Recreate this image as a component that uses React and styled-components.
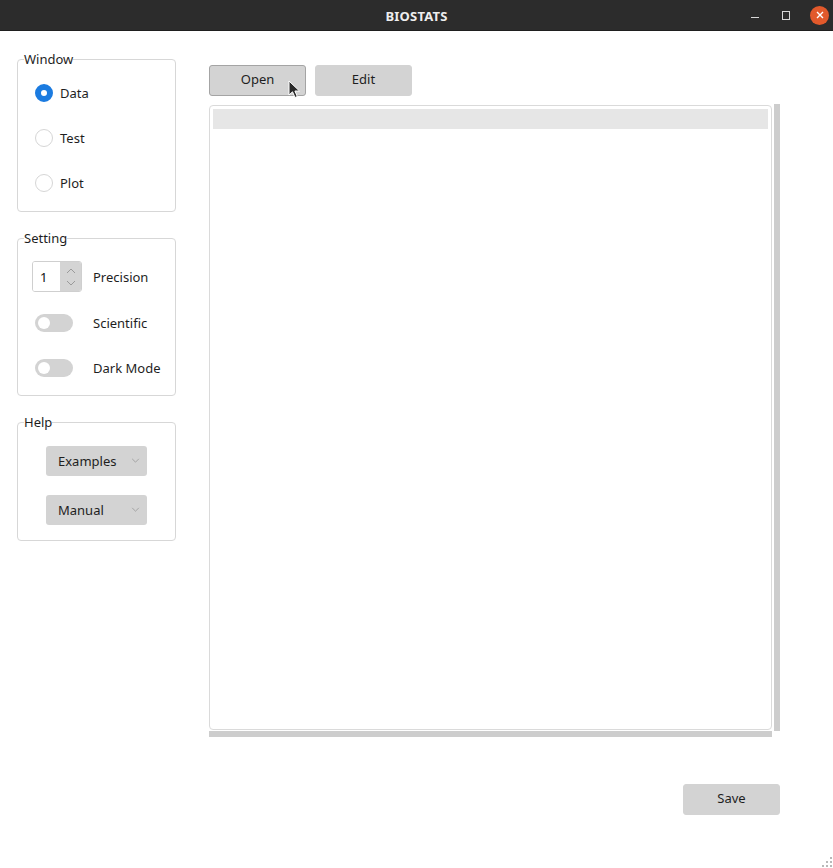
import React from 'react';
import styled, { createGlobalStyle } from 'styled-components';

const GlobalStyle = createGlobalStyle`
  html, body {
    margin: 0;
    padding: 0;
    background: #ffffff;
  }
  body {
    font-family: "Noto Sans", "Open Sans", "DejaVu Sans", sans-serif;
    font-size: 13px;
    color: #1e1e1e;
  }
`;

const Chevron = ({ up, color = '#8a8a8a', size = 9 }) => (
  <svg width={size} height={Math.round(size * 0.6)} viewBox="0 0 10 6">
    <polyline
      points={up ? '1,5 5,1 9,5' : '1,1 5,5 9,1'}
      fill="none"
      stroke={color}
      strokeWidth="1"
    />
  </svg>
);

const App = () => {
  return (
    <Frame>
      <GlobalStyle />
      <TitleBar>
        <span />
        <Title>BIOSTATS</Title>
        <Controls>
          <MinBtn />
          <MaxBtn />
          <CloseBtn>
            <svg width="8" height="8" viewBox="0 0 8 8">
              <path d="M1 1L7 7M7 1L1 7" stroke="#fff" strokeWidth="1.4" />
            </svg>
          </CloseBtn>
        </Controls>
      </TitleBar>

      <Body>
        <Sidebar>
          <Group $pt={3} $pb={6}>
            <Legend>Window</Legend>
            <Content $pl={17}>
              <Row $h={45}>
                <Radio $checked />
                <Label>Data</Label>
              </Row>
              <Row $h={45}>
                <Radio />
                <Label>Test</Label>
              </Row>
              <Row $h={45}>
                <Radio />
                <Label>Plot</Label>
              </Row>
            </Content>
          </Group>

          <Group $pt={8} $pb={6}>
            <Legend>Setting</Legend>
            <Content $pl={14}>
              <Row $h={45}>
                <Spin>
                  <SpinValue>1</SpinValue>
                  <SpinArrows>
                    <Chevron up size={10} color="#9a9a9a" />
                    <Chevron size={10} color="#9a9a9a" />
                  </SpinArrows>
                </Spin>
                <Label $gap={11}>Precision</Label>
              </Row>
              <Row $h={47}>
                <Toggle />
                <Label $gap={20}>Scientific</Label>
              </Row>
              <Row $h={43}>
                <Toggle />
                <Label $gap={20}>Dark Mode</Label>
              </Row>
            </Content>
          </Group>

          <Group $pt={6} $pb={6}>
            <Legend>Help</Legend>
            <Content $pl={28}>
              <Row $h={49}>
                <Combo>
                  Examples
                  <Chevron color="#9a9a9a" />
                </Combo>
              </Row>
              <Row $h={49}>
                <Combo>
                  Manual
                  <Chevron color="#9a9a9a" />
                </Combo>
              </Row>
            </Content>
          </Group>
        </Sidebar>

        <Main>
          <Toolbar>
            <Button $focused>Open</Button>
            <Button>Edit</Button>
          </Toolbar>

          <TableArea>
            <Table>
              <HeaderRow />
            </Table>
            <VScroll />
            <HScroll />
          </TableArea>

          <Footer>
            <Button>Save</Button>
          </Footer>
        </Main>
      </Body>

      <Cursor width="13" height="19" viewBox="0 0 13 19">
        <path
          d="M1 1 L1 15 L4.5 11.8 L7 17.5 L9.3 16.5 L6.9 11 L11.5 11 Z"
          fill="#2a2a2a"
          stroke="#ffffff"
          strokeWidth="1"
          strokeLinejoin="round"
        />
      </Cursor>

      <Grip width="13" height="13" viewBox="0 0 13 13">
        {[
          [10, 2],
          [6, 6],
          [10, 6],
          [2, 10],
          [6, 10],
          [10, 10],
        ].map(([x, y]) => (
          <rect key={`${x}-${y}`} x={x} y={y} width="2" height="2" fill="#b9b9b9" />
        ))}
      </Grip>
    </Frame>
  );
};

export default App;

const Frame = styled.div`
  position: relative;
  width: 833px;
  height: 868px;
  display: flex;
  flex-direction: column;
  overflow: hidden;
  background: #ffffff;
`;

const TitleBar = styled.div`
  height: 31px;
  flex: none;
  background: #2c2c2c;
  border-bottom: 1px solid #1f1f1f;
  box-sizing: border-box;
  display: grid;
  grid-template-columns: 1fr auto 1fr;
  align-items: center;
`;

const Title = styled.div`
  color: #eeeeee;
  font-weight: 700;
  font-size: 13px;
  letter-spacing: 0.2px;
  padding-top: 1px;
`;

const Controls = styled.div`
  justify-self: end;
  display: flex;
  align-items: center;
  padding-right: 4px;
`;

const MinBtn = styled.div`
  width: 8px;
  height: 1px;
  background: #d8d8d8;
  margin-top: 4px;
  margin-right: 23px;
`;

const MaxBtn = styled.div`
  width: 6px;
  height: 7px;
  border: 1px solid #d8d8d8;
  margin-right: 20px;
`;

const CloseBtn = styled.div`
  width: 19px;
  height: 19px;
  border-radius: 50%;
  background: #e2592b;
  display: flex;
  align-items: center;
  justify-content: center;
`;

const Body = styled.div`
  flex: 1;
  display: flex;
  align-items: flex-start;
`;

const Sidebar = styled.div`
  width: 159px;
  margin-left: 17px;
  margin-top: 20px;
  display: flex;
  flex-direction: column;
  gap: 18px;
`;

const Group = styled.fieldset`
  margin: 0;
  border: 1px solid #d7d7d7;
  border-radius: 4px;
  padding: ${(p) => p.$pt}px 0 ${(p) => p.$pb}px 0;
  min-width: 0;
`;

const Legend = styled.legend`
  margin-left: 6px;
  padding: 0;
  font-size: 13px;
  line-height: 16px;
  color: #1e1e1e;
`;

const Content = styled.div`
  padding-left: ${(p) => p.$pl}px;
  display: flex;
  flex-direction: column;
`;

const Row = styled.div`
  height: ${(p) => p.$h}px;
  display: flex;
  align-items: center;
`;

const Label = styled.span`
  margin-left: ${(p) => p.$gap ?? 7}px;
  font-size: 13px;
  color: #1e1e1e;
`;

const Radio = styled.span`
  width: 18px;
  height: 18px;
  box-sizing: border-box;
  border-radius: 50%;
  flex: none;
  background: #ffffff;
  border: ${(p) => (p.$checked ? '6px solid #1b7be0' : '1.5px solid #d6d6d6')};
`;

const Spin = styled.div`
  width: 50px;
  height: 31px;
  box-sizing: border-box;
  border: 1px solid #cfcfcf;
  border-radius: 3px;
  display: flex;
  overflow: hidden;
  flex: none;
`;

const SpinValue = styled.div`
  flex: 1;
  background: #ffffff;
  padding-left: 7px;
  display: flex;
  align-items: center;
  font-size: 13px;
  color: #111;
`;

const SpinArrows = styled.div`
  width: 21px;
  background: #d4d4d4;
  display: flex;
  flex-direction: column;
  align-items: center;
  justify-content: center;
  gap: 6px;
`;

const Toggle = styled.span`
  width: 38px;
  height: 18px;
  border-radius: 9px;
  background: #d3d3d3;
  margin-left: 3px;
  flex: none;
  display: flex;
  align-items: center;
  padding-left: 3px;
  box-sizing: border-box;

  &::before {
    content: '';
    width: 12px;
    height: 12px;
    border-radius: 50%;
    background: #ffffff;
  }
`;

const Combo = styled.div`
  width: 101px;
  height: 30px;
  box-sizing: border-box;
  background: #d3d3d3;
  border-radius: 3px;
  display: flex;
  align-items: center;
  justify-content: space-between;
  padding: 0 7px 0 12px;
  font-size: 13px;
  color: #1e1e1e;
`;

const Main = styled.div`
  margin-left: 33px;
  padding-top: 34px;
  width: 571px;
  display: flex;
  flex-direction: column;
`;

const Toolbar = styled.div`
  display: flex;
  gap: 9px;
`;

const Button = styled.button`
  width: 97px;
  height: 31px;
  box-sizing: border-box;
  border-radius: 3px;
  border: 1px solid ${(p) => (p.$focused ? '#a4a4a4' : '#d3d3d3')};
  background: #d3d3d3;
  font-family: inherit;
  font-size: 13px;
  color: #1e1e1e;
  padding: 0 0 3px;
`;

const TableArea = styled.div`
  margin-top: 9px;
  display: grid;
  grid-template-columns: 563px 6px;
  grid-template-rows: 625px 6px;
  column-gap: 2px;
  row-gap: 1px;
`;

const Table = styled.div`
  box-sizing: border-box;
  border: 1px solid #dadada;
  border-radius: 4px;
  padding: 3px;
  background: #ffffff;
`;

const HeaderRow = styled.div`
  height: 20px;
  background: #e6e6e6;
`;

const VScroll = styled.div`
  background: #cdcdcd;
  margin: -1px 0;
`;

const HScroll = styled.div`
  background: #cdcdcd;
`;

const Footer = styled.div`
  margin-top: 47px;
  display: flex;
  justify-content: flex-end;
`;

const Cursor = styled.svg`
  position: absolute;
  left: 288px;
  top: 80px;
`;

const Grip = styled.svg`
  position: absolute;
  right: 0;
  bottom: 0;
`;
